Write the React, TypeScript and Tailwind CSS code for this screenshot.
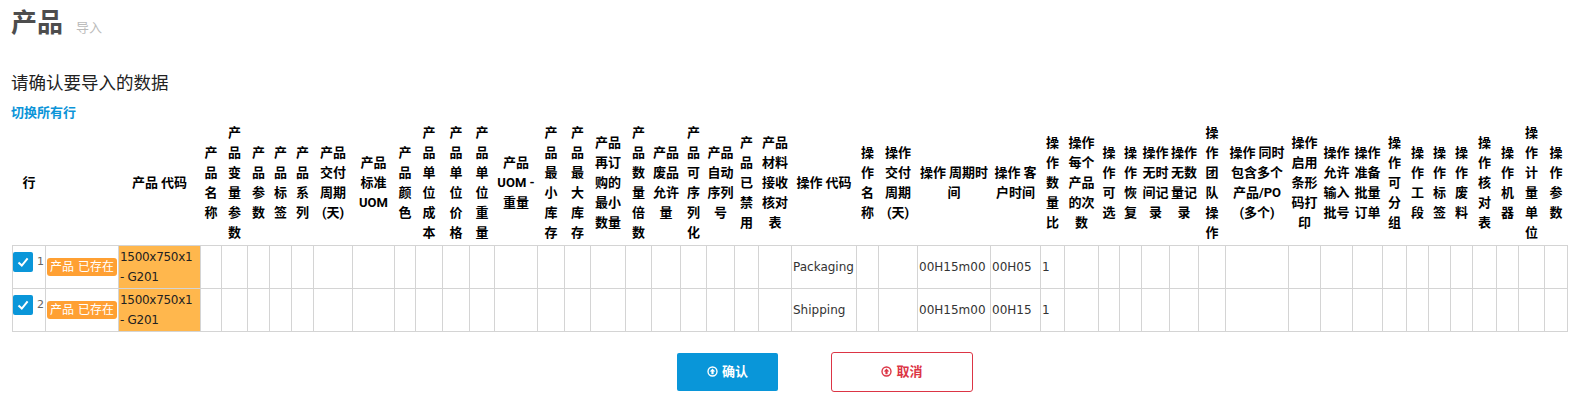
// App.tsx - product import confirmation page
const font = "font-['DejaVu_Sans','Noto_Sans_CJK_SC',sans-serif]";

// column header text (line breaks as shown) and width class
const columns: { label: string; w: string }[] = [
  { label: '行', w: 'w-[33px]' },
  { label: '', w: 'w-[73px]' },
  { label: '产品 代码', w: 'w-[82px]' },
  { label: '产\n品\n名\n称', w: 'w-[21px]' },
  { label: '产\n品\n变\n量\n参\n数', w: 'w-[26px]' },
  { label: '产\n品\n参\n数', w: 'w-[22px]' },
  { label: '产\n品\n标\n签', w: 'w-[22px]' },
  { label: '产\n品\n系\n列', w: 'w-[22px]' },
  { label: '产品\n交付\n周期\n(天)', w: 'w-[39px]' },
  { label: '产品\n标准\nUOM', w: 'w-[42px]' },
  { label: '产\n品\n颜\n色', w: 'w-[21px]' },
  { label: '产\n品\n单\n位\n成\n本', w: 'w-[27px]' },
  { label: '产\n品\n单\n位\n价\n格', w: 'w-[27px]' },
  { label: '产\n品\n单\n位\n重\n量', w: 'w-[25px]' },
  { label: '产品\nUOM -\n重量', w: 'w-[43px]' },
  { label: '产\n品\n最\n小\n库\n存', w: 'w-[27px]' },
  { label: '产\n品\n最\n大\n库\n存', w: 'w-[26px]' },
  { label: '产品\n再订\n购的\n最小\n数量', w: 'w-[35px]' },
  { label: '产\n品\n数\n量\n倍\n数', w: 'w-[26px]' },
  { label: '产品\n废品\n允许\n量', w: 'w-[29px]' },
  { label: '产\n品\n可\n序\n列\n化', w: 'w-[26px]' },
  { label: '产品\n自动\n序列\n号', w: 'w-[28px]' },
  { label: '产\n品\n已\n禁\n用', w: 'w-[24px]' },
  { label: '产品\n材料\n接收\n核对\n表', w: 'w-[33px]' },
  { label: '操作 代码', w: 'w-[65px]' },
  { label: '操\n作\n名\n称', w: 'w-[22px]' },
  { label: '操作\n交付\n周期\n(天)', w: 'w-[39px]' },
  { label: '操作 周期时\n间', w: 'w-[73px]' },
  { label: '操作 客\n户时间', w: 'w-[50px]' },
  { label: '操\n作\n数\n量\n比', w: 'w-[24px]' },
  { label: '操作\n每个\n产品\n的次\n数', w: 'w-[34px]' },
  { label: '操\n作\n可\n选', w: 'w-[21px]' },
  { label: '操\n作\n恢\n复', w: 'w-[22px]' },
  { label: '操作\n无时\n间记\n录', w: 'w-[28px]' },
  { label: '操作\n无数\n量记\n录', w: 'w-[29px]' },
  { label: '操\n作\n团\n队\n操\n作', w: 'w-[27px]' },
  { label: '操作 同时\n包含多个\n产品/PO\n(多个)', w: 'w-[63px]' },
  { label: '操作\n启用\n条形\n码打\n印', w: 'w-[32px]' },
  { label: '操作\n允许\n输入\n批号', w: 'w-[32px]' },
  { label: '操作\n准备\n批量\n订单', w: 'w-[30px]' },
  { label: '操\n作\n可\n分\n组', w: 'w-[24px]' },
  { label: '操\n作\n工\n段', w: 'w-[22px]' },
  { label: '操\n作\n标\n签', w: 'w-[22px]' },
  { label: '操\n作\n废\n料', w: 'w-[22px]' },
  { label: '操\n作\n核\n对\n表', w: 'w-[24px]' },
  { label: '操\n作\n机\n器', w: 'w-[22px]' },
  { label: '操\n作\n计\n量\n单\n位', w: 'w-[26px]' },
  { label: '操\n作\n参\n数', w: 'w-[23px]' },
];

const rows = [
  { no: 1, op: 'Packaging', client: '00H05' },
  { no: 2, op: 'Shipping', client: '00H15' },
];

// fa-arrow-circle-o-up style icon
const CircleUp = () => (
  <svg viewBox="0 0 12 12" className="w-[11px] h-[11px]" fill="none">
    <circle cx="6" cy="6" r="4.9" stroke="currentColor" strokeWidth="1.5" />
    <path d="M6 2.8 9 6H7.2v3H4.8V6H3z" fill="currentColor" />
  </svg>
);

const Row = ({ no, op, client }: { no: number; op: string; client: string }) => {
  const cells: Record<number, string> = { 24: op, 27: '00H15m00', 28: client, 29: '1' };
  return (
    <tr className="h-[43px]">
      <td className="border border-[#d4d4d4] px-0 pt-[6px] align-top">
        <div className="flex items-start gap-[4px]">
          <span className="flex h-[20px] w-[20px] items-center justify-center rounded-[2px] bg-[#0a96d9]">
            <svg viewBox="0 0 20 20" className="h-[20px] w-[20px]" fill="none">
              <path d="M5.5 10.5 8.8 13.6 14.6 6.4" stroke="white" strokeWidth="2" />
            </svg>
          </span>
          <span className="mt-[3px] text-[11px] leading-[14px] text-[#666]">{no}</span>
        </div>
      </td>
      <td className="border border-[#d4d4d4] px-px align-middle">
        <span className="block rounded-[3px] bg-[#ffa033] text-center text-[12px] leading-[18px] whitespace-nowrap text-white">
          产品 已存在
        </span>
      </td>
      <td className="border border-[#d4d4d4] bg-[#ffb74d] px-px align-middle text-[12px] leading-[20px] tracking-[-0.3px] text-[#222]">
        1500x750x1 - G201
      </td>
      {columns.slice(3).map((_, i) => (
        <td key={i} className="border border-[#d4d4d4] px-px align-middle text-[12px] leading-[20px] whitespace-nowrap text-[#333]">
          {cells[i + 3] ?? ''}
        </td>
      ))}
    </tr>
  );
};

export default function App() {
  return (
    <div className={`${font} h-[403px] overflow-hidden bg-white pl-[11px] text-[#333]`}>
      <div className="flex items-end gap-[13px] pt-[7px]">
        <h1 className="text-[26px] leading-[32px] font-bold text-[#4d4d4d]">产品</h1>
        <span className="pb-[1px] text-[13px] leading-[20px] text-[#bbb]">导入</span>
      </div>
      <p className="mt-[32px] text-[17.5px] leading-[24px] font-normal text-[#222]">请确认要导入的数据</p>
      <a className="mt-[8px] block text-[13px] leading-[20px] font-bold text-[#0b94d8]">切换所有行</a>

      <table className="ml-px w-[1555px] table-fixed border-collapse">
        <thead>
          <tr className="h-[122px]">
            {columns.map((c, i) => (
              <th key={i} className={`${c.w} px-0 pb-[1px] text-center align-middle font-['Roboto','Noto_Sans_CJK_SC',sans-serif] text-[13px] leading-[20px] font-bold whitespace-pre text-black`}>
                {c.label}
              </th>
            ))}
          </tr>
        </thead>
        <tbody>
          {rows.map(r => (
            <Row key={r.no} {...r} />
          ))}
        </tbody>
      </table>

      <div className="mt-[20px] flex items-center gap-[53px] pl-[666px]">
        <button className="flex h-[38px] w-[101px] items-center justify-center gap-[4px] rounded-[2px] bg-[#0996d9] text-[13px] font-bold text-white">
          <CircleUp />
          确认
        </button>
        <button className="flex h-[40px] w-[142px] items-center justify-center gap-[4px] rounded-[3px] border border-[#dc3545] bg-white text-[13px] font-bold text-[#dc3545]">
          <CircleUp />
          取消
        </button>
      </div>
    </div>
  );
}
